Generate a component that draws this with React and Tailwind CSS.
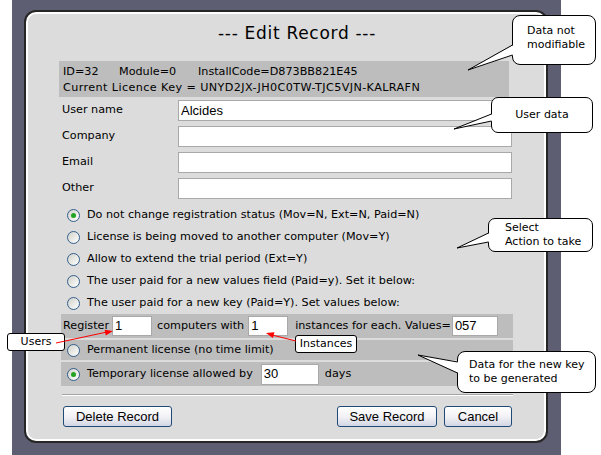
import React from "react";

function Radio({ checked }) {
  return (
    <span className="flex h-[13px] w-[13px] shrink-0 items-center justify-center rounded-full border border-[#335f8c] bg-linear-to-br from-[#d2d2ca] to-white">
      {checked && <span className="h-[5px] w-[5px] rounded-full bg-[#22a322]" />}
    </span>
  );
}

function Field({ w, h = 20, value, className = "" }) {
  return (
    <div
      className={`flex shrink-0 items-center border border-[#a9a9a9] bg-white pl-[2px] font-['Liberation_Sans',sans-serif] text-[13px] text-black ${className}`}
      style={{ width: w, height: h }}
    >
      {value}
    </div>
  );
}

function Row({ label, value }) {
  return (
    <div className="flex h-[21px] items-center">
      <span className="pl-[3px]">{label}</span>
      <Field w={334} h={21} value={value} className="ml-auto mr-[1px]" />
    </div>
  );
}

function RadioRow({ checked, children }) {
  return (
    <div className="flex h-[22px] items-center gap-[7px] pl-[8px] whitespace-nowrap">
      <Radio checked={checked} />
      <span>{children}</span>
    </div>
  );
}

function Button({ w, children }) {
  return (
    <div
      className="flex h-[21px] items-center justify-center rounded-[3px] border border-[#1f4a78] bg-linear-to-b from-white via-[#f2f2f6] to-[#d3d6e4] font-['Liberation_Sans',sans-serif] text-[13px] text-black"
      style={{ width: w }}
    >
      {children}
    </div>
  );
}

export default function App() {
  return (
    <div className="relative h-[455px] w-[601px] overflow-hidden bg-white font-['DejaVu_Sans',sans-serif] text-[11.2px] text-black">
      <div className="ml-[12px] h-[455px] w-[549px] bg-[#5e5e72] pt-[10px]">
        <div className="ml-[12px] h-[433px] w-[524px] rounded-[12px] border-2 border-[#262626] bg-[#dcdcdc] shadow-[inset_0_0_0_2px_#ffffff]">
          <div className="ml-[33px] w-[454px]">
            <div className="mt-[10px] h-[22px] pl-[159px] text-[17px] leading-[22px] tracking-[0.7px] whitespace-nowrap">
              --- Edit Record ---
            </div>
            <div className="mt-[17px] h-[36px] w-[450px] bg-[#bdbdbd] pl-[4px] pt-[3px] leading-[16px] whitespace-nowrap">
              <div className="flex">
                <span className="w-[56px]">ID=32</span>
                <span className="w-[79px]">Module=0</span>
                <span>InstallCode=D873BB821E45</span>
              </div>
              <div className="tracking-[0.4px]">Current Licence Key = UNYD2JX-JH0C0TW-TJC5VJN-KALRAFN</div>
            </div>
            <div className="mt-[3px] flex flex-col gap-[5px]">
              <Row label="User name" value="Alcides" />
              <Row label="Company" value="" />
              <Row label="Email" value="" />
              <Row label="Other" value="" />
            </div>
            <div className="mt-[5px] flex flex-col">
              <RadioRow checked>Do not change registration status (Mov=N, Ext=N, Paid=N)</RadioRow>
              <RadioRow>License is being moved to another computer (Mov=Y)</RadioRow>
              <RadioRow>Allow to extend the trial period (Ext=Y)</RadioRow>
              <RadioRow>The user paid for a new values field (Paid=y). Set it below:</RadioRow>
              <RadioRow>The user paid for a new key (Paid=Y). Set values below:</RadioRow>
            </div>
            <div className="ml-[2px] flex w-[452px] flex-col gap-[2px]">
              <div className="flex h-[24px] items-center bg-[#bdbdbd] pl-[2px] whitespace-nowrap">
                <span>Register</span>
                <Field w={40} value="1" className="ml-[3px]" />
                <span className="ml-[5px]">computers with</span>
                <Field w={40} value="1" className="ml-[4px]" />
                <span className="ml-[7px]">instances for each. Values=</span>
                <Field w={46} value="057" className="ml-[1px]" />
              </div>
              <div className="flex h-[20px] items-center gap-[7px] bg-[#bdbdbd] pl-[6px]">
                <Radio />
                <span>Permanent license (no time limit)</span>
              </div>
              <div className="flex h-[24px] items-center bg-[#bdbdbd] pl-[6px] whitespace-nowrap">
                <Radio checked />
                <span className="ml-[7px]">Temporary license allowed by</span>
                <Field w={58} h={21} value="30" className="ml-[8px]" />
                <span className="ml-[6px]">days</span>
              </div>
            </div>
            <div className="ml-[3px] mt-[8px] w-[451px]">
              <div className="h-px bg-[#a4a4a4]" />
              <div className="h-px bg-white" />
            </div>
            <div className="mt-[10px] flex items-center">
              <div className="ml-[4px]">
                <Button w={109}>Delete Record</Button>
              </div>
              <div className="ml-auto">
                <Button w={100}>Save Record</Button>
              </div>
              <div className="ml-[7px] mr-[1px]">
                <Button w={68}>Cancel</Button>
              </div>
            </div>
          </div>
        </div>
      </div>

      {/* Callout boxes */}
      <div className="absolute left-[512px] top-[15px] h-[50px] w-[84px] rounded-[8px] border border-black bg-white pl-[14px] pt-[8px] text-[11px] leading-[14px]">
        <div>Data not</div>
        <div>modifiable</div>
      </div>
      <div className="absolute left-[491px] top-[97px] flex h-[36px] w-[102px] items-center justify-center rounded-[7px] border border-black bg-white text-[11px]">
        User data
      </div>
      <div className="absolute left-[488px] top-[218px] h-[34px] w-[105px] rounded-[7px] border border-black bg-white pl-[16px] pt-[2px] text-[11px] leading-[14px]">
        <div>Select</div>
        <div>Action to take</div>
      </div>
      <div className="absolute left-[457px] top-[351px] h-[42px] w-[139px] rounded-[8px] border border-black bg-white pl-[11px] pt-[6px] text-[11px] leading-[14px]">
        <div>Data for the new key</div>
        <div>to be generated</div>
      </div>
      <div className="absolute left-[7px] top-[333px] flex h-[18px] w-[58px] items-center justify-center rounded-[3px] border border-black bg-white text-[11px]">
        Users
      </div>
      <div className="absolute left-[295px] top-[335px] flex h-[18px] w-[62px] items-center justify-center rounded-[3px] border border-black bg-white text-[11px]">
        Instances
      </div>

      <svg className="pointer-events-none absolute left-0 top-0" width="601" height="455" viewBox="0 0 601 455">
        <polygon points="513.5,45 468,70 513.5,55" fill="#fff" />
        <polyline points="512.5,45 468,70 512.5,55" fill="none" stroke="#000" strokeWidth="1" />
        <polygon points="492.5,114 454,129 492.5,121" fill="#fff" />
        <polyline points="491.5,114 454,129 491.5,121" fill="none" stroke="#000" strokeWidth="1" />
        <polygon points="489.5,233 457,248 489.5,242" fill="#fff" />
        <polyline points="488.5,233 457,248 488.5,242" fill="none" stroke="#000" strokeWidth="1" />
        <polygon points="458.5,362 418,355 458.5,373" fill="#fff" />
        <polyline points="457.5,362 418,355 457.5,373" fill="none" stroke="#000" strokeWidth="1" />
        <line x1="56" y1="343" x2="107" y2="332" stroke="#ff0000" strokeWidth="1" />
        <polygon points="113,331 105.8,335.6 104.6,329.7" fill="#ff0000" />
        <line x1="296" y1="341" x2="272" y2="335" stroke="#ff0000" strokeWidth="1" />
        <polygon points="266,333 274.5,332.2 272.9,338" fill="#ff0000" />
      </svg>
    </div>
  );
}
